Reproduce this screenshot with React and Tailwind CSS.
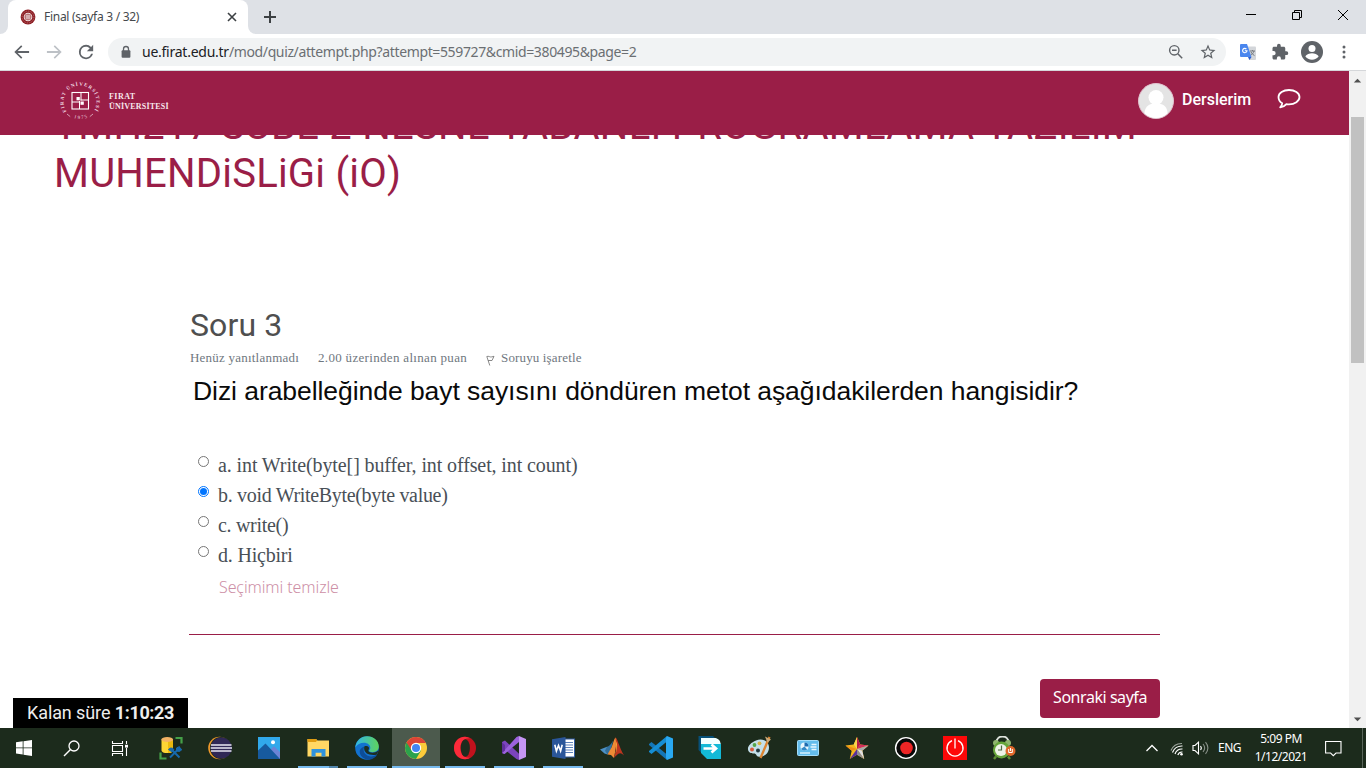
import React from "react";

const Svg = ({ w = 24, h = w, vb = "0 0 24 24", className = "", children }) => (
  <svg width={w} height={h} viewBox={vb} fill="none" className={"block shrink-0 " + className}>
    {children}
  </svg>
);

function TabStrip() {
  return (
    <div className="flex h-[34px] shrink-0 bg-[#dee1e6]">
      <div className="flex w-2 items-end bg-white">
        <div className="h-full w-2 rounded-br-[8px] bg-[#dee1e6]" />
      </div>
      <div className="flex w-[240px] items-center rounded-t-lg bg-white pr-[10px] pl-3">
        <Svg w={16} vb="0 0 16 16">
          <circle cx="8" cy="8" r="7.4" fill="#8c1c22" />
          <circle cx="8" cy="8" r="5.9" stroke="#c98e91" strokeWidth=".7" strokeDasharray="1 .8" />
          <circle cx="8" cy="8" r="4.3" fill="#f3e6e6" />
          <circle cx="8" cy="8" r="3.3" fill="#8c1c22" />
          <path d="M6 6h4v4H6zM8 6v4M6 8h4" stroke="#fff" strokeWidth=".8" />
        </Svg>
        <span className="ml-2 w-[170px] font-['Noto_Sans'] text-[12px] leading-4 tracking-[-0.28px] whitespace-nowrap text-[#45494d]">Final (sayfa 3 / 32)</span>
        <Svg w={12} vb="0 0 12 12" className="ml-auto">
          <path d="M2 2l8 8M10 2l-8 8" stroke="#3c4043" strokeWidth="1.6" />
        </Svg>
      </div>
      <div className="flex w-2 bg-white">
        <div className="h-full w-2 rounded-bl-[8px] bg-[#dee1e6]" />
      </div>
      <Svg w={14} vb="0 0 14 14" className="mt-[10px] ml-[7px]">
        <path d="M7 1v12M1 7h12" stroke="#3c4043" strokeWidth="2" />
      </Svg>
      <div className="ml-auto flex h-[29px] items-center">
        <div className="flex w-[46px] justify-center">
          <div className="h-px w-[10px] bg-black" />
        </div>
        <div className="flex w-[46px] justify-center">
          <Svg w={12} vb="0 0 12 12">
            <path d="M1.5 3.5h7v7h-7zM3.5 3.5v-2h7v7h-2" stroke="#000" />
          </Svg>
        </div>
        <div className="flex w-[46px] justify-center">
          <Svg w={12} vb="0 0 12 12">
            <path d="M1 1l10 10M11 1L1 11" stroke="#000" />
          </Svg>
        </div>
      </div>
    </div>
  );
}

function Toolbar() {
  return (
    <div className="flex h-[37px] shrink-0 items-center border-b border-[#d5d7da] bg-white pr-[14px] pl-3">
      <Svg w={20} className="text-[#5f6368]">
        <path fill="currentColor" d="M20.500 10.900H6.800l5.600-5.600L11 3.800 2.800 12l8.200 8.200 1.400-1.500-5.600-5.600H20.500z" />
      </Svg>
      <Svg w={20} className="ml-3 text-[#bdc1c6]">
        <path fill="currentColor" d="M3.500 10.900h13.700l-5.600-5.600L13 3.800l8.200 8.200-8.200 8.200-1.400-1.500 5.600-5.600H3.500z" />
      </Svg>
      <Svg w={20} className="ml-3 text-[#5f6368]">
        <path fill="currentColor" d="M18.1 5.9A8.6 8.6 0 0 0 12 3.4a8.6 8.6 0 1 0 8.4 10.800h-2.300A6.4 6.4 0 1 1 12 5.600c1.800 0 3.400.7 4.500 1.900L13 11h7.600V3.400z" />
      </Svg>
      <div className="ml-3 flex h-7 w-[1118px] shrink-0 items-center rounded-full bg-[#f1f3f4] pr-[9px] pl-[11px]">
        <Svg w={14} vb="0 0 14 14">
          <rect x="2.6" y="5.3" width="8.8" height="7.5" rx="1" fill="#5f6368" />
          <path d="M4.5 6V4a2.5 2.5 0 0 1 5 0v2" stroke="#5f6368" strokeWidth="1.3" />
        </Svg>
        <span className="ml-[9px] font-['Noto_Sans'] text-[14px] leading-5 whitespace-nowrap text-[#6b6f73]">
          <span className="tracking-[-0.25px] text-[#202124]">ue.firat.edu.tr</span>
          <span className="tracking-[-0.37px]">/mod/quiz/attempt.php?attempt=559727&amp;cmid=380495&amp;page=2</span>
        </span>
        <Svg w={16} vb="0 0 16 16" className="ml-auto">
          <circle cx="6.3" cy="6.3" r="4.7" stroke="#5f6368" strokeWidth="1.4" />
          <path d="M9.8 9.8l4.4 4.4M4 6.3h4.6" stroke="#5f6368" strokeWidth="1.500" />
        </Svg>
        <Svg w={18} className="ml-[15px]">
          <path fill="#5f6368" d="M22 9.24l-7.19-.62L12 2 9.19 8.63 2 9.24l5.46 4.73L5.82 21 12 17.27 18.18 21l-1.63-7.03L22 9.24zM12 15.4l-3.76 2.27 1-4.28-3.32-2.88 4.38-.38L12 6.1l1.71 4.04 4.38.38-3.32 2.88 1 4.28L12 15.4z" />
        </Svg>
      </div>
      <Svg w={16} vb="0 0 16 16" className="ml-[14px]">
        <path d="M6 2.500h9a1 1 0 0 1 1 1V15a1 1 0 0 1-1 1H9z" fill="#d3d6da" />
        <path d="M1 0h6l4.500 13H1a1 1 0 0 1-1-1V1a1 1 0 0 1 1-1z" fill="#4a86ee" />
        <path d="M8 13h3.500L9.500 16z" fill="#2c5fd0" />
        <path d="M6.400 5A2.200 2.200 0 1 0 7 6.800H4.800" stroke="#fff" strokeWidth="1.100" />
        <path d="M10 7h5M12.500 6v1M14 7c-.5 2-2 3.500-3 4M11 8c.8 1.500 2 2.800 3.500 3.600" stroke="#74797f" />
      </Svg>
      <Svg w={18} className="ml-[15px]">
        <path fill="#5f6368" d="M20.500 11H19V7c0-1.100-.9-2-2-2h-4V3.500a2.500 2.500 0 0 0-5 0V5H4c-1.100 0-2 .9-2 2v3.800h1.500a2.700 2.700 0 0 1 0 5.400H2V20c0 1.100.9 2 2 2h3.800v-1.500a2.700 2.700 0 0 1 5.400 0V22H17c1.100 0 2-.9 2-2v-4h1.500a2.500 2.500 0 0 0 0-5z" />
      </Svg>
      <Svg w={22} className="ml-[12px]" vb="0 0 22 22">
        <circle cx="11" cy="11" r="11" fill="#5f6368" />
        <circle cx="11" cy="7.400" r="3.500" fill="#fff" />
        <path d="M4.300 15.200c1.300-2 4.200-3 6.700-3s5.400 1 6.700 3a8 8 0 0 1-13.400 0z" fill="#fff" />
      </Svg>
      <Svg w={16} vb="0 0 16 16" className="ml-auto">
        <circle cx="8" cy="3" r="1.500" fill="#5f6368" />
        <circle cx="8" cy="8" r="1.500" fill="#5f6368" />
        <circle cx="8" cy="13" r="1.500" fill="#5f6368" />
      </Svg>
    </div>
  );
}

function SiteHeader() {
  return (
    <header className="flex h-16 shrink-0 items-center bg-[#9a1e47] pr-[48px] pl-[59px]">
      <Svg w={42} vb="0 0 42 42" className="-mt-[5px]">
        <defs>
          <path id="ring" d="M7.500 31.500a16.500 16.500 0 1 1 27 0" />
          <path id="year" d="M11 36.400a20 20 0 0 0 20 0" />
        </defs>
        <text fill="#f3dde5" fontSize="4.900" fontFamily="Liberation Serif, serif" fontWeight="bold">
          <textPath href="#ring" textLength="70">FIRAT ÜNİVERSİTESİ</textPath>
        </text>
        <text fill="#f3dde5" fontSize="5" fontFamily="Liberation Serif, serif">
          <textPath href="#year" startOffset="4" textLength="14">1975</textPath>
        </text>
        <path d="M8 34l3.200 2.600M34 34l-3.200 2.600" stroke="#e6bfcd" strokeWidth=".8" />
        <rect x="13" y="12.500" width="16.500" height="16.500" stroke="#fff" strokeWidth="1.100" />
        <path d="M22 12.500v8M20.500 21v8M13 22h8M21.500 20h8" stroke="#fff" strokeWidth="1" />
        <rect x="17.500" y="17" width="3.300" height="3.300" fill="#fff" />
        <rect x="21.500" y="21.500" width="3.300" height="3.300" fill="#fff" />
      </Svg>
      <div className="-mt-[3px] ml-2 font-['Liberation_Serif'] text-[8px] leading-[10px] font-bold whitespace-nowrap text-[#f7e6ec]">
        <div className="tracking-[0.45px]">FIRAT</div>
        <div className="tracking-[0.2px]">ÜNİVERSİTESİ</div>
      </div>
      <Svg w={36} vb="0 0 36 36" className="mt-[-5px] ml-auto">
        <circle cx="18" cy="18" r="17.500" fill="#e4e4e4" stroke="#e2c3ce" />
        <circle cx="18" cy="14.500" r="7.500" fill="#fff" />
        <path d="M6.500 30.500c0-6 4.500-9.500 7-9.500h9c3 0 7 3.500 7 9.500A17 17 0 0 1 6.500 30.500z" fill="#fff" />
      </Svg>
      <span className="mt-[-6px] ml-2 w-[70px] font-['Roboto'] text-[16px] leading-5 font-medium whitespace-nowrap text-white">Derslerim</span>
      <Svg w={24} h={22} vb="0 0 24 22" className="mt-[-8px] ml-[25px]">
        <path d="M12 2c5.800 0 10.500 3.100 10.500 7.100s-4.700 7.200-10.500 7.200c-.9 0-1.800-.1-2.600-.2-1.500 1.800-3.800 2.900-6.200 3.200 1-1 1.900-2.200 2-4C2.900 14 1.500 11.700 1.500 9.100 1.500 5.100 6.200 2 12 2z" stroke="#fff" strokeWidth="1.800" strokeLinejoin="round" />
      </Svg>
    </header>
  );
}

const OPTIONS = [
  { text: "a. int Write(byte[] buffer, int offset, int count)", cls: "tracking-[-0.11px]" },
  { text: "b. void WriteByte(byte value)", checked: true, cls: "tracking-[-0.32px]" },
  { text: "c. write()", cls: "tracking-[-0.3px]" },
  { text: "d. Hiçbiri", cls: "tracking-[-0.2px]" },
];

function Radio({ checked }) {
  return (
    <span className={"mt-[6px] flex size-[11px] shrink-0 items-center justify-center rounded-full border bg-white " + (checked ? "border-[#0075ff]" : "border-[#767676]")}>
      {checked && <span className="size-[7px] rounded-full bg-[#0075ff]" />}
    </span>
  );
}

function Quiz() {
  return (
    <div className="relative flex min-h-0 grow flex-col overflow-hidden bg-white">
      <h1 className="-mt-[33px] h-24 shrink-0 pl-[54px] font-['Roboto'] text-[40px] leading-[48px] whitespace-nowrap text-[#9a1e47]">
        <div className="tracking-[0.27px]">YMH217 SUBE 2 NESNE TABANLI PROGRAMLAMA YAZILIM</div>
        <div className="tracking-[0.22px]">MUHENDiSLiGi (iO)</div>
      </h1>
      <div className="mt-[108px] ml-[189px] flex w-[971px] flex-col">
        <h2 className="h-[38px] pl-px font-['Roboto'] text-[32px] leading-[38px] tracking-[0.1px] text-[#4f4f4f]">Soru 3</h2>
        <div className="mt-1 flex h-5 items-center pl-px font-['Liberation_Serif'] text-[13px] leading-5 whitespace-nowrap text-[#6f7780]">
          <span className="w-[128px] tracking-[0.22px]">Henüz yanıtlanmadı</span>
          <span className="w-[168px] tracking-[0.32px]">2.00 üzerinden alınan puan</span>
          <Svg w={9} h={11} vb="0 0 9 11" className="mt-1">
            <path d="M.8 1.500c2-.8 3 .9 5 .4l2.200-.6-2 4.200c-1.500.4-2.500-.4-4 0M.8 1.500L3.800 10.500" stroke="#7c7c7c" strokeWidth=".9" />
          </Svg>
          <span className="ml-[6px] tracking-[0.15px]">Soruyu işaretle</span>
        </div>
        <div className="mt-[6px] h-[34px] pl-1 font-['Liberation_Sans'] text-[26.500px] leading-[34px] tracking-[-0.06px] whitespace-nowrap text-[#0a0a0a]">
          Dizi arabelleğinde bayt sayısını döndüren metot aşağıdakilerden hangisidir?
        </div>
        <div className="mt-[42px] flex flex-col pl-[9px]">
          {OPTIONS.map((o) => (
            <label key={o.text} className="flex h-[30px]">
              <Radio checked={o.checked} />
              <span className={"ml-[9px] font-['Liberation_Serif'] text-[20px] leading-[30px] whitespace-nowrap text-[#495057] " + o.cls}>{o.text}</span>
            </label>
          ))}
        </div>
        <a className="h-9 pl-[30px] font-['Noto_Sans'] text-[16px] leading-[35px] font-light tracking-[-0.1px] whitespace-nowrap text-[#cd8fa6]">Seçimimi temizle</a>
        <div className="mt-7 h-px bg-[#9a1e47]" />
        <button className="mt-11 h-[39px] w-[120px] self-end rounded bg-[#9a1e47] pb-[2px] text-center font-['Noto_Sans'] text-[16px] leading-[37px] tracking-[-0.45px] whitespace-nowrap text-white">Sonraki sayfa</button>
      </div>
      <div className="absolute bottom-0 left-[13px] h-[30px] w-[175px] bg-black pl-[14px] font-['Roboto'] text-[18px] leading-[30px] tracking-[-0.1px] whitespace-nowrap text-[#eee]">
        Kalan süre <b className="tracking-[-0.35px]">1:10:23</b>
      </div>
    </div>
  );
}

function Scrollbar() {
  return (
    <div className="flex w-[17px] shrink-0 flex-col items-center bg-[#f1f1f1]">
      <Svg w={9} h={5} vb="0 0 9 5" className="mt-[7px]">
        <path d="M.8 4.500L4.500.8 8.200 4.500z" fill="#505050" />
      </Svg>
      <div className="mt-[34px] h-[246px] w-[13px] bg-[#c1c1c1]" />
      <Svg w={9} h={5} vb="0 0 9 5" className="mt-auto mb-[6px]">
        <path d="M.8.500L4.500 4.200 8.200.500z" fill="#505050" />
      </Svg>
    </div>
  );
}

const STAR = "M12 1l3.300 7.600 8.200.8-6.200 5.400 1.900 8.200L12 18.700 4.800 23l1.900-8.200L.5 9.400l8.200-.8z";

const APPS = [
  { id: "sql", art: (
    <>
      <path d="M2.500 3.500v11c0 1.600 2.500 2.600 5.700 2.600s5.800-1 5.800-2.600v-11z" fill="#fcd535" />
      <path d="M9 17c3-.2 5-1.100 5-2.500v-11H9z" fill="#eab90f" />
      <ellipse cx="8.200" cy="3.500" rx="5.800" ry="2.500" fill="#f2b265" />
      <path d="M16.500 2h6v5.500M1.500 16.500v6h6" stroke="#45a048" strokeWidth="2.200" />
      <path d="M11 21.500l7-7M13 14l7.500 7.500" stroke="#1769ad" strokeWidth="2" />
      <path d="M9.500 13.500c1.500-2 4.500-2 5.500.5l-2 2zM20.500 10.500l-3 1.500v3l3 .5 2.500-2" fill="#1769ad" stroke="#1769ad" />
    </>
  ) },
  { id: "eclipse", art: (
    <>
      <circle cx="11.500" cy="12" r="11.300" fill="#f19a2a" />
      <circle cx="12.900" cy="12" r="11" fill="#1c2b1c" />
      <circle cx="13.300" cy="12" r="10.600" fill="#302856" />
      <path d="M3 9h20.500M2.700 12H24M3 15h20.500" stroke="#e8e6f2" strokeWidth="1.500" />
    </>
  ) },
  { id: "photos", art: (
    <>
      <rect x="1" y="1" width="22" height="22" fill="#31a9eb" />
      <path d="M14 13l3-2.800 6 5.800v7H14z" fill="#6c84d6" />
      <path d="M1 14.500L8.500 7.500 23 23H1z" fill="#175a9e" />
      <circle cx="16" cy="6.300" r="2" fill="#fff" />
    </>
  ) },
  { id: "explorer", run: "split", art: (
    <>
      <path d="M1.500 3h8.500l1.500 1.500H23V20.500H1.500z" fill="#ffd764" />
      <path d="M1.500 3h8.500l1.200 1.500-1.400 1.500H1.500z" fill="#e09c12" />
      <path d="M5.500 20.500V13h14v7.500h-4v-3.700H9.600v3.700z" fill="#2f93dd" />
    </>
  ) },
  { id: "edge", run: "full", art: (
    <>
      <defs>
        <linearGradient id="eg" x1="0" x2="1"><stop offset="0" stopColor="#30b6e8" /><stop offset="1" stopColor="#5fd35b" /></linearGradient>
      </defs>
      <circle cx="12" cy="12" r="11.800" fill="#1272cf" />
      <path d="M.3 11.500C1 4.500 6.200.2 12 .2c6.800 0 11.800 4.800 11.800 10.300 0 3.700-3 5.700-6.200 5.700-2 0-3.500-.7-3.500-1.400 0-.5 1.200-1 1.200-3C15.300 9 12.500 6.800 9 6.800c-3.700 0-7 1.700-8.700 4.700z" fill="url(#eg)" />
      <path d="M9.300 10.500c-2 4 .2 8.700 5.200 9.700 3 .6 5.800-.3 7.800-1.700-1.500 2.700-4.600 5-8.600 5.300-5.500-.5-9-4-9-8.200 0-2 1.500-4.200 4.600-5.100z" fill="#0d4d97" />
      <path d="M9.300 10.500c1.800-1 4.200-.3 4.700 1.300.3 1.500-1 2.300-.5 3.500 1 1.800 6.500 2.200 9.800-.8-.2 1.400-.6 2.700-1.300 3.900-2 .8-4.500 .8-7.500.2-4-1-6-4.500-5.200-8.100z" fill="#1d2f24" />
    </>
  ) },
  { id: "chrome", run: "active", art: (
    <>
      <circle cx="12" cy="12" r="11" fill="#fccb3a" />
      <path d="M12 12L2.500 6.500A11 11 0 0 0 12 23l5-8.500z" fill="#2ba24c" />
      <path d="M12 7h9.900A11 11 0 0 0 2.500 6.500L7.600 14.500z" fill="#db4437" />
      <circle cx="12" cy="12" r="5.200" fill="#fff" />
      <circle cx="12" cy="12" r="4" fill="#4285f4" />
    </>
  ) },
  { id: "opera", run: "full", art: (
    <>
      <ellipse cx="12" cy="12" rx="11" ry="11.200" fill="#c0121d" />
      <path d="M12 .8C5.500.8 1 5.800 1 12s4.500 11.200 11 11.200c2.500 0 4-.8 5-1.500C9 22 7.500 16 7.500 12S9 2 17 2.300A10 10 0 0 0 12 .8z" fill="#fb2b3a" />
      <ellipse cx="12.300" cy="12" rx="4.600" ry="8.800" fill="#1d2c1e" />
    </>
  ) },
  { id: "vs", run: "full", art: (
    <>
      <path d="M0 6l3-1.500 14 13.300V24L14.500 23 5 15.500 2.500 18 0 17z" fill="#7b44bd" />
      <path d="M2.500 18L17 6V0l-2.500 1L0 17z" fill="#9b62dc" />
      <path d="M0 6.500v10.500l3-2.500V9z" fill="#5f2f9b" />
      <path d="M17 0l7 3v18l-7 3z" fill="#c596f4" />
    </>
  ) },
  { id: "word", run: "full", art: (
    <>
      <rect x="12" y="3" width="11.500" height="18" fill="#fff" stroke="#315b9f" />
      <path d="M14 6.500h8M14 9h8M14 11.500h8M14 14h8M14 16.500h8" stroke="#5b80b8" />
      <path d="M1 3.200L14.500 1v22L1 20.800z" fill="#2a5699" />
      <path d="M3.800 8.700l1.600 6.300 2.100-5.500 2.100 5.500 1.600-6.300" stroke="#fff" strokeWidth="1.600" />
    </>
  ) },
  { id: "matlab", art: (
    <>
      <path d="M0 13.500l7-2.800 3.500 3.500-3 4.200-3-1z" fill="#4c90c5" />
      <path d="M7 10.700c2.500-.3 4.800-4 6-6l-1.800 8-3.700 5.700-2.500-3.600z" fill="#326f9b" />
      <path d="M10 14c2-1.500 3.500-10.500 5.500-12.500L17 5l-3 17-3-3-3.500-.5z" fill="#ed8b36" />
      <path d="M15.500 1.500c1.500 0 3.500 9 8.500 18-2.500-2.500-4-3-6-1.500l-4.300 4c2.800-5 2.500-14 1.800-20.500z" fill="#bd351f" />
      <path d="M15.500 4c1 5 1.500 9-.2 14 1.700-3.500 2-8 1.700-10z" fill="#ffc13b" />
    </>
  ) },
  { id: "vscode", art: (
    <>
      <path d="M0 8l2.500-2L18 18.500V24L0 9z" fill="#1476b8" />
      <path d="M0 16l2.500 2L18 5.500V0L0 15z" fill="#168ed4" />
      <path d="M18 0l6 2.500v19L18 24l-1-2V2z" fill="#29a9f2" />
    </>
  ) },
  { id: "bandicut", art: (
    <>
      <path d="M.5 0H15l3 3v14H3.500L.5 14z" fill="#075078" />
      <path d="M3 2h15l5 6v15H9l-6-6z" fill="#13b9d7" />
      <path d="M3 2h13c4 0 6.500 2.500 6.500 6H3z" fill="#f2ffff" />
      <path d="M5.500 12.500H17M13.500 8.500l4.500 4-4.500 4" stroke="#fff" strokeWidth="2.700" />
    </>
  ) },
  { id: "paint", art: (
    <>
      <path d="M9 4.500c6-2.500 13 0 13 7 0 6.500-6 10-11 9-2-.4-1.500-3-4-3s-5.500-.5-6-4C.5 10 4 6.500 9 4.500z" fill="#c4dfe9" />
      <circle cx="5" cy="13.500" r="2" fill="#db5b3e" />
      <circle cx="7.500" cy="9" r="1.900" fill="#55a64b" />
      <circle cx="12.500" cy="7.300" r="1.900" fill="#d7b043" />
      <circle cx="11" cy="14.500" r="2" fill="#233940" />
      <path d="M22.500 1L13.500 22" stroke="#dc8430" strokeWidth="2.300" />
      <path d="M18 .5l6 3-3.500 3z" fill="#c9a878" />
    </>
  ) },
  { id: "control", art: (
    <>
      <rect x="1.500" y="4.500" width="21" height="15" rx="1" fill="#64bdec" stroke="#a3ddf9" />
      <circle cx="8.500" cy="10.500" r="4" fill="#e9f7fe" />
      <path d="M8.500 10.500v-4a4 4 0 0 1 4 4z" fill="#1d6bb0" />
      <path d="M8.500 10.500l-3.400 2.200a4 4 0 0 0 6 .8z" fill="#3489c7" />
      <path d="M15.500 8.500h5M14.500 11h6M15.500 13.500h5" stroke="#e6f7ff" strokeWidth="1.300" />
      <path d="M4 17h10" stroke="#e6f7ff" strokeWidth="1.300" />
    </>
  ) },
  { id: "star", art: (
    <>
      <path d={STAR} fill="#f3b51c" />
      <path d="M12 1l3.300 7.600L12 13z" fill="#b51c4c" />
      <path d="M12 1v12L8.700 8.600z" fill="#f7d64d" />
      <path d="M15.300 8.600l8.200.8L12 13z" fill="#d42e5e" />
      <path d="M23.500 9.400l-6.200 5.400L12 13z" fill="#a7a7ac" />
      <path d="M17.300 14.800l1.900 8.200L12 13z" fill="#dfdfe4" />
      <path d="M12 13v5.700l7.200 4.300z" fill="#8b8b94" />
      <path d="M12 13v5.700L4.800 23z" fill="#58309d" />
      <path d="M12 13l-5.300 1.800L.5 9.400z" fill="#ef8d15" />
    </>
  ) },
  { id: "record", art: (
    <>
      <circle cx="12" cy="12" r="10.400" fill="#080808" stroke="#fff" strokeWidth="1.400" />
      <circle cx="12.500" cy="12" r="6.300" fill="#ed2525" />
    </>
  ) },
  { id: "power", art: (
    <>
      <rect width="24" height="24" fill="#fe0808" />
      <path d="M9 4.700a8 8 0 1 0 6 0M12 2.500v10" stroke="#fff" strokeWidth="1.300" />
    </>
  ) },
  { id: "timer", art: (
    <>
      <path d="M4.500 6.500c0-8 12-8 12 0" stroke="#dde2dc" strokeWidth="2" />
      <path d="M4 20.500l-2 2.500M16 20.500l2 2.500" stroke="#5e8e35" strokeWidth="2.500" />
      <circle cx="4" cy="7" r="3" fill="#8fb56e" />
      <circle cx="16" cy="7" r="3" fill="#8fb56e" />
      <circle cx="9.500" cy="14" r="8.500" fill="#66a53a" />
      <circle cx="9" cy="14" r="6" fill="#eef3e8" />
      <path d="M9.500 9.500v4.500H6" stroke="#4f6b45" strokeWidth="1.200" />
      <circle cx="18.500" cy="15" r="5" fill="#df682b" />
      <path d="M16.700 13v3.500h3.600V13M18.500 12v3" stroke="#fff" strokeWidth="1" />
    </>
  ) },
];

function AppSlot({ app }) {
  return (
    <div className={"flex h-10 shrink-0 flex-col items-center " + (app.run === "active" ? "ml-px w-12 bg-[#4c5a4d]" : "w-[49px]")}>
      <Svg w={24} className="mt-2">{app.art}</Svg>
      {app.run === "full" && <div className="mt-auto h-[2px] w-10 bg-[#76b9ed]" />}
      {app.run === "active" && <div className="mt-auto h-[2px] w-full bg-[#76b9ed]" />}
      {app.run === "split" && (
        <div className="mt-auto flex h-[2px] w-10">
          <div className="grow bg-[#76b9ed]" />
          <div className="w-[9px] bg-[#5286ad]" />
        </div>
      )}
    </div>
  );
}

function Taskbar() {
  return (
    <div className="flex h-10 shrink-0 items-center bg-[#1c2b1c] text-white">
      <div className="flex w-12 justify-center">
        <Svg w={16} vb="0 0 16 16">
          <path d="M0 2.300l6.700-1v6.200H0zM7.500 1.200L16 0v7.500H7.500zM0 8.300h6.700v6.200L0 13.600zM7.500 8.300H16V16l-8.500-1.300z" fill="#fff" />
        </Svg>
      </div>
      <div className="flex w-12 justify-center pr-px">
        <Svg w={17} vb="0 0 17 17">
          <circle cx="11" cy="6" r="5" stroke="#fff" strokeWidth="1.300" />
          <path d="M7.500 9.500L1 16" stroke="#fff" strokeWidth="1.500" />
        </Svg>
      </div>
      <div className="flex w-[50px] justify-center pr-[3px]">
        <Svg w={17} vb="0 0 17 17">
          <path d="M1.500 1v2.500h10V1M1.500 16v-2.500h10V16M1.500 5.500h10v6h-10zM15.500 1v3M15.500 8v8" stroke="#fff" strokeWidth="1.100" />
          <rect x="14" y="4.800" width="3" height="2.800" fill="#fff" />
        </Svg>
      </div>
      {APPS.map((app) => <AppSlot key={app.id} app={app} />)}
      <div className="ml-auto flex h-full items-center">
        <Svg w={12} h={8} vb="0 0 12 8">
          <path d="M.5 7L6 1.500 11.500 7" stroke="#fff" strokeWidth="1.300" />
        </Svg>
        <Svg w={14} vb="0 0 14 14" className="mt-[2px] ml-3">
          <path d="M1 8.500A11.500 11.500 0 0 1 12 1.500" stroke="#9aa29a" strokeWidth="1.200" />
          <path d="M2.500 10.500A10 10 0 0 1 12.500 4M5 12a7.500 7.500 0 0 1 7.500-5M7.800 13a4.600 4.600 0 0 1 4.700-3" stroke="#fff" strokeWidth="1.200" />
          <circle cx="11.500" cy="12.300" r="1.300" fill="#fff" />
        </Svg>
        <Svg w={17} h={14} vb="0 0 17 14" className="ml-2">
          <path d="M1 4.500h2L6.500 1.200v11.600L3 9.500H1z" stroke="#fff" strokeWidth="1.100" />
          <path d="M8.500 5c1 1.200 1 2.800 0 4" stroke="#fff" strokeWidth="1.100" />
          <path d="M11 3c2 2.400 2 5.600 0 8M13.500 1.200c2.900 3.500 2.900 8.100 0 11.600" stroke="#899189" strokeWidth="1.100" />
        </Svg>
        <span className="ml-[9px] w-[24px] font-['Noto_Sans'] text-[12px] leading-4 tracking-[-0.5px] whitespace-nowrap">ENG</span>
        <div className="ml-3 w-[54px] text-center font-['Noto_Sans'] text-[12px] leading-[18px] tracking-[-0.5px] whitespace-nowrap">
          <div>5:09 PM</div>
          <div>1/12/2021</div>
        </div>
        <Svg w={17} h={17} vb="0 0 17 17" className="ml-[17px]">
          <path d="M.6 1.500h15.400v11.500h-5L8.300 15.700 5.600 13h-5z" stroke="#fff" strokeWidth="1.100" />
        </Svg>
        <div className="ml-5 h-full w-px bg-[#59655a]" />
        <div className="w-[3px]" />
      </div>
    </div>
  );
}

export default function App() {
  return (
    <div className="flex h-[768px] w-[1366px] flex-col overflow-hidden bg-white">
      <TabStrip />
      <Toolbar />
      <div className="flex min-h-0 grow">
        <div className="flex w-[1349px] shrink-0 flex-col">
          <SiteHeader />
          <Quiz />
        </div>
        <Scrollbar />
      </div>
      <Taskbar />
    </div>
  );
}
